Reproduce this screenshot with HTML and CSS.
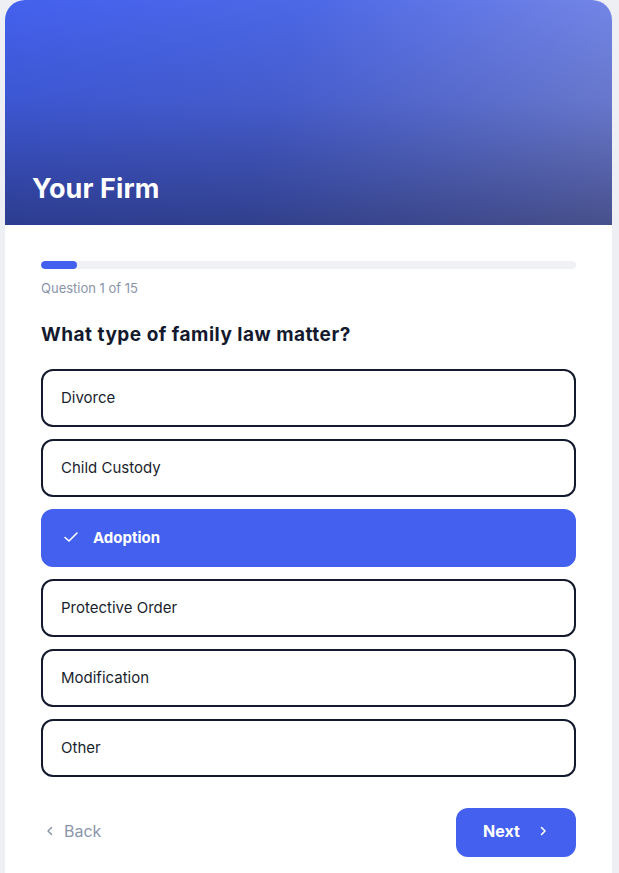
FILE: index.html
```html
<!DOCTYPE html>
<html lang="en">
<head>
<meta charset="utf-8">
<title>Your Firm – Intake</title>
<link rel="stylesheet" href="styles.css">
</head>
<body>
<div class="page">
  <main class="card">
    <header class="hero">
      <h1 class="firm">Your Firm</h1>
    </header>
    <section class="body">
      <div class="progress"><div class="progress-fill" style="width: 6.67%"></div></div>
      <p class="counter">Question 1 of 15</p>
      <h2 class="question">What type of family law matter?</h2>
      <div class="options">
        <button class="option">Divorce</button>
        <button class="option">Child Custody</button>
        <button class="option selected">
          <svg class="check" width="16" height="16" viewBox="0 0 16 16" fill="none"><path d="M2 8.5 L6 12 L14 4" stroke="#fff" stroke-width="1.6" stroke-linecap="round" stroke-linejoin="round"/></svg>
          Adoption
        </button>
        <button class="option">Protective Order</button>
        <button class="option">Modification</button>
        <button class="option">Other</button>
      </div>
      <div class="nav">
        <button class="back">
          <svg width="12" height="12" viewBox="0 0 12 12" fill="none"><path d="M7.5 2.5 L4 6 L7.5 9.5" stroke="#8b96ab" stroke-width="1.5" stroke-linecap="round" stroke-linejoin="round"/></svg>
          Back
        </button>
        <button class="next">
          Next
          <svg width="12" height="12" viewBox="0 0 12 12" fill="none"><path d="M4.5 2.5 L8 6 L4.5 9.5" stroke="#fff" stroke-width="1.6" stroke-linecap="round" stroke-linejoin="round"/></svg>
        </button>
      </div>
    </section>
  </main>
</div>
</body>
</html>
```

FILE: styles.css
```css
* { box-sizing: border-box; }
html, body {
  margin: 0;
  padding: 0;
  background: #eeeff4;
  font-family: Inter, "Noto Sans", sans-serif;
}
.page {
  padding-left: 5px;
  width: 612px;
  min-height: 873px;
}
.card {
  background: #ffffff;
  border-radius: 20px 20px 0 0;
  overflow: hidden;
  min-height: 873px;
}
.hero {
  height: 225px;
  display: flex;
  align-items: flex-end;
  padding: 0 27px 20px;
  background:
    linear-gradient(to bottom, rgba(20, 22, 50, 0) 0%, rgba(20, 22, 50, 0.15) 45%, rgba(20, 22, 50, 0.5) 100%),
    linear-gradient(105deg, #4361ee 0%, #4d68e6 45%, #7a8be6 100%);
}
.firm {
  margin: 0;
  color: #ffffff;
  font-size: 27px;
  line-height: 32px;
  font-weight: 700;
  letter-spacing: 0.1px;
}
.body {
  padding: 36px 36px 0;
}
.progress {
  height: 8px;
  background: #f0f1f5;
  border-radius: 4px;
  overflow: hidden;
}
.progress-fill {
  height: 100%;
  background: #4361ee;
  border-radius: 4px;
}
.counter {
  margin: 10px 0 0;
  font-size: 13px;
  line-height: 18px;
  color: #8a94a8;
}
.question {
  margin: 26px 0 0;
  font-size: 19px;
  line-height: 24px;
  font-weight: 700;
  letter-spacing: 0.5px;
  color: #141a2e;
}
.options {
  margin-top: 22px;
  display: flex;
  flex-direction: column;
  gap: 12px;
}
.option {
  display: flex;
  align-items: center;
  gap: 14px;
  height: 58px;
  padding: 0 18px 2px;
  border: 2px solid #141a2e;
  border-radius: 12px;
  background: #ffffff;
  font-family: inherit;
  font-size: 15px;
  color: #1a1f2e;
  text-align: left;
}
.option.selected {
  background: #4361ee;
  border-color: #4361ee;
  color: #ffffff;
  font-weight: 700;
  padding-left: 20px;
}
.check { flex: none; }
.nav {
  margin-top: 31px;
  display: flex;
  justify-content: space-between;
  align-items: center;
}
.back {
  display: flex;
  align-items: center;
  gap: 8px;
  padding: 0 0 4px 3px;
  border: 0;
  background: none;
  font-family: inherit;
  font-size: 16px;
  color: #8b96ab;
}
.next {
  display: flex;
  align-items: center;
  justify-content: center;
  gap: 17px;
  width: 120px;
  height: 49px;
  border: 0;
  border-radius: 12px;
  background: #4361ee;
  color: #ffffff;
  font-family: inherit;
  font-size: 16px;
  font-weight: 700;
  padding: 0 0 3px 0;
}
```
